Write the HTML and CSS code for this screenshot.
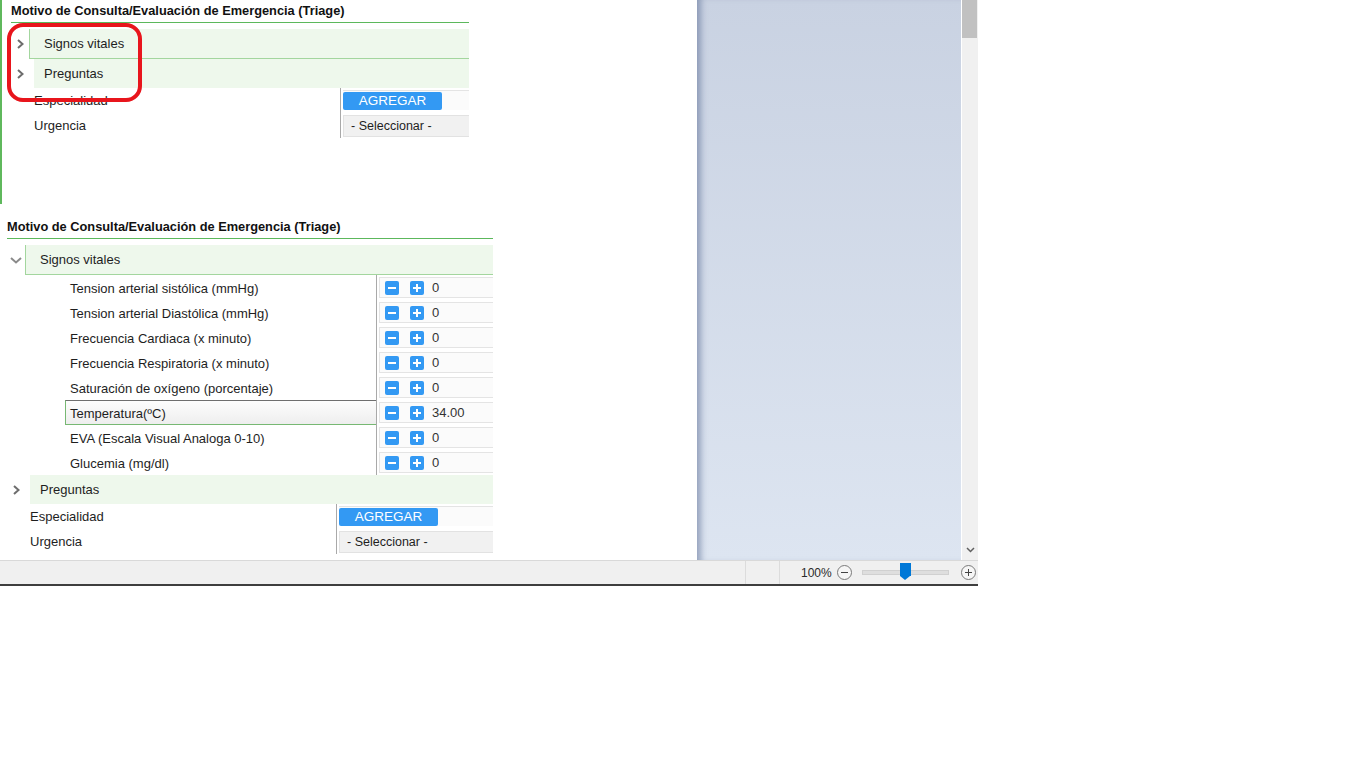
FILE: index.html
```html
<!DOCTYPE html>
<html lang="es">
<head>
  <meta charset="UTF-8" />
  <meta name="viewport" content="width=device-width, initial-scale=1" />
  <title>Triage - Documento</title>
  <link rel="stylesheet" href="styles.css">
</head>
<body>
  <div class="window">
    <div class="workspace">
      <div class="page">

        <!-- primera captura, recortada arriba -->
        <section class="snap snap-cropped">
          <h3 class="snap-title">Motivo de Consulta/Evaluación de Emergencia (Triage)</h3>
          <div class="group">
            <span class="chev"><svg width="7" height="10" viewBox="0 0 7 10"><polyline points="1,1 5.5,5 1,9" /></svg></span>
            <div class="group-head is-focused">Signos vitales</div>
          </div>
          <div class="group">
            <span class="chev"><svg width="7" height="10" viewBox="0 0 7 10"><polyline points="1,1 5.5,5 1,9" /></svg></span>
            <div class="group-head">Preguntas</div>
          </div>
          <div class="field-row">
            <span class="field-label">Especialidad</span>
            <div class="field-value"><div class="field-box"><button class="btn-add">AGREGAR</button></div></div>
          </div>
          <div class="field-row">
            <span class="field-label">Urgencia</span>
            <div class="field-value"><div class="select-box">- Seleccionar -</div></div>
          </div>
          <div class="callout"></div>
        </section>

        <!-- segunda captura, signos vitales abiertos -->
        <section class="snap snap-full">
          <h3 class="snap-title">Motivo de Consulta/Evaluación de Emergencia (Triage)</h3>
          <div class="group">
            <span class="chev chev-open"><svg width="12" height="7" viewBox="0 0 12 7"><polyline points="1,1 6,5.5 11,1" /></svg></span>
            <div class="group-head is-focused">Signos vitales</div>
          </div>
          <div class="vitals">
            <div class="vital-row">
              <div class="vital-cell"><span class="vital-label">Tension arterial sistólica (mmHg)</span></div>
              <div class="vital-value"><div class="stepper"><span class="step step-minus"></span><span class="step step-plus"></span><span class="step-num">0</span></div></div>
            </div>
            <div class="vital-row">
              <div class="vital-cell"><span class="vital-label">Tension arterial Diastólica (mmHg)</span></div>
              <div class="vital-value"><div class="stepper"><span class="step step-minus"></span><span class="step step-plus"></span><span class="step-num">0</span></div></div>
            </div>
            <div class="vital-row">
              <div class="vital-cell"><span class="vital-label">Frecuencia Cardiaca (x minuto)</span></div>
              <div class="vital-value"><div class="stepper"><span class="step step-minus"></span><span class="step step-plus"></span><span class="step-num">0</span></div></div>
            </div>
            <div class="vital-row">
              <div class="vital-cell"><span class="vital-label">Frecuencia Respiratoria (x minuto)</span></div>
              <div class="vital-value"><div class="stepper"><span class="step step-minus"></span><span class="step step-plus"></span><span class="step-num">0</span></div></div>
            </div>
            <div class="vital-row">
              <div class="vital-cell"><span class="vital-label">Saturación de oxígeno (porcentaje)</span></div>
              <div class="vital-value"><div class="stepper"><span class="step step-minus"></span><span class="step step-plus"></span><span class="step-num">0</span></div></div>
            </div>
            <div class="vital-row">
              <div class="vital-cell"><span class="vital-label is-active">Temperatura(ºC)</span></div>
              <div class="vital-value"><div class="stepper"><span class="step step-minus"></span><span class="step step-plus"></span><span class="step-num">34.00</span></div></div>
            </div>
            <div class="vital-row">
              <div class="vital-cell"><span class="vital-label">EVA (Escala Visual Analoga 0-10)</span></div>
              <div class="vital-value"><div class="stepper"><span class="step step-minus"></span><span class="step step-plus"></span><span class="step-num">0</span></div></div>
            </div>
            <div class="vital-row">
              <div class="vital-cell"><span class="vital-label">Glucemia (mg/dl)</span></div>
              <div class="vital-value"><div class="stepper"><span class="step step-minus"></span><span class="step step-plus"></span><span class="step-num">0</span></div></div>
            </div>
          </div>
          <div class="group">
            <span class="chev"><svg width="7" height="10" viewBox="0 0 7 10"><polyline points="1,1 5.5,5 1,9" /></svg></span>
            <div class="group-head">Preguntas</div>
          </div>
          <div class="field-row">
            <span class="field-label">Especialidad</span>
            <div class="field-value"><div class="field-box"><button class="btn-add">AGREGAR</button></div></div>
          </div>
          <div class="field-row">
            <span class="field-label">Urgencia</span>
            <div class="field-value"><div class="select-box">- Seleccionar -</div></div>
          </div>
        </section>

      </div>
      <div class="backdrop"></div>
      <div class="scrollbar">
        <div class="scroll-thumb"></div>
        <svg class="scroll-down" width="9" height="6" viewBox="0 0 9 6"><polyline points="1,1 4.5,4.5 8,1" /></svg>
      </div>
    </div>

    <footer class="statusbar">
      <div class="status-cell status-main"></div>
      <div class="status-cell status-small"></div>
      <div class="zoom">
        <span class="zoom-level">100%</span>
        <span class="zoom-btn zoom-out"></span>
        <span class="zoom-track"><span class="zoom-thumb"></span></span>
        <span class="zoom-btn zoom-in"></span>
      </div>
    </footer>
  </div>
</body>
</html>
```

FILE: styles.css
```css
body {
  margin: 0;
  background: #fff;
  font-family: "Liberation Sans", Arial, sans-serif;
  font-size: 13px;
  color: #1e1e1e;
}
.window {
  width: 978px;
}
.workspace {
  display: grid;
  grid-template-columns: 697px 264px 17px;
  height: 560px;
}
.page {
  background: #fff;
  overflow: hidden;
  display: flex;
  flex-direction: column;
}

/* capturas */
.snap {
  position: relative;
  overflow: hidden;
  box-sizing: border-box;
}
.snap-cropped {
  width: 469px;
  height: 204px;
  border-left: 2px solid #5fb85c;
  padding-left: 2px;
}
.snap-full {
  width: 493px;
  margin-top: 12px;
}
.snap-title {
  margin: 0 0 6px 7px;
  height: 22px;
  line-height: 22px;
  font-size: 12.8px;
  font-weight: bold;
  color: #111;
  border-bottom: 1px solid #5cb85c;
}
.group {
  display: flex;
}
.chev {
  width: 25px;
  flex: none;
  display: flex;
  align-items: center;
  padding-left: 13px;
  box-sizing: border-box;
}
.chev polyline {
  fill: none;
  stroke: #6d6d6d;
  stroke-width: 2;
}
.chev-open {
  padding-left: 10px;
}
.chev-open polyline { stroke: #8a8a8a; }
.group-head {
  flex: 1;
  height: 29px;
  line-height: 29px;
  margin-left: 5px;
  padding-left: 10px;
  background: #eef8ec;
}
.group-head.is-focused {
  margin-left: 0;
  padding-left: 14px;
  border-left: 1px solid #a3d69e;
  border-bottom: 1px solid #a3d69e;
}

/* filas especialidad / urgencia */
.field-row {
  display: grid;
  grid-template-columns: 337px 1fr;
  height: 25px;
}
.field-label {
  line-height: 25px;
  padding-left: 30px;
  border-right: 1px solid #a9a9a9;
}
.field-value {
  padding: 2px 0 0 2px;
}
.field-box {
  height: 20px;
  border-top: 1px solid #e4e4e4;
  background: #fbfbfb;
  padding-top: 1px;
  box-sizing: border-box;
}
.btn-add {
  display: block;
  width: 99px;
  height: 18px;
  border: none;
  border-radius: 2px;
  background: #3399f3;
  color: #fff;
  font-family: "Liberation Sans", Arial, sans-serif;
  font-size: 13.5px;
  padding: 0;
  line-height: 18px;
}
.select-box {
  height: 22px;
  line-height: 21px;
  background: #f1f1f1;
  border: 1px solid #e2e2e2;
  border-right: none;
  padding-left: 7px;
  font-size: 12.5px;
  box-sizing: border-box;
}

/* signos vitales */
.vital-row {
  display: grid;
  grid-template-columns: 377px 1fr;
  height: 25px;
}
.vital-cell {
  padding-left: 65px;
  border-right: 1px solid #a9a9a9;
}
.vital-label {
  display: block;
  height: 25px;
  line-height: 25px;
  padding-left: 4px;
  border: 1px solid transparent;
  border-right: none;
  box-sizing: border-box;
}
.vital-label.is-active {
  border-color: #77b873;
  border-top-color: #6f6f6f;
  background: linear-gradient(#fdfdfd, #eeeeee);
}
.vital-value {
  padding: 2px 0 2px 2px;
}
.stepper {
  height: 21px;
  border: 1px solid #e4e4e4;
  border-right: none;
  background: #fbfbfb;
  display: flex;
  align-items: center;
  padding-left: 5px;
  box-sizing: border-box;
}
.step {
  position: relative;
  width: 14px;
  height: 14px;
  border-radius: 2px;
  background: #3399f3;
  margin-right: 11px;
}
.step-plus { margin-right: 8px; }
.step::before,
.step-plus::after {
  content: "";
  position: absolute;
  left: 3px;
  top: 6px;
  width: 8px;
  height: 2px;
  background: #fff;
}
.step-plus::after {
  left: 6px;
  top: 3px;
  width: 2px;
  height: 8px;
}
.step-num {
  color: #333;
}

/* marca roja encima de la primera captura */
.callout {
  position: absolute;
  left: 5px;
  top: 23px;
  width: 135px;
  height: 79px;
  border: 4px solid #e8151c;
  border-radius: 16px;
  box-sizing: border-box;
}

/* fondo de word y barra */
.backdrop {
  background: linear-gradient(#c9d2e2, #dde5f1);
  box-shadow: inset 8px 0 6px -4px rgba(90, 108, 145, 0.55);
}
.scrollbar {
  position: relative;
  background: #f0f0f0;
  border-left: 1px solid #fff;
}
.scroll-thumb {
  width: 15px;
  height: 38px;
  background: #c1c1c1;
}
.scroll-down {
  position: absolute;
  left: 4px;
  bottom: 7px;
}
.scroll-down polyline {
  fill: none;
  stroke: #606060;
  stroke-width: 1.5;
}

.statusbar {
  display: flex;
  height: 23px;
  background: #f0f0f0;
  border-top: 1px solid #d9d9d9;
  border-bottom: 2px solid #3e3e3e;
}
.status-cell {
  border-right: 1px solid #dcdcdc;
}
.status-main { width: 745px; }
.status-small { width: 33px; }
.zoom {
  display: flex;
  align-items: center;
  padding-left: 21px;
  font-size: 12px;
  color: #2a2a2a;
}
.zoom-level {
  width: 28px;
}
.zoom-btn {
  position: relative;
  width: 13px;
  height: 13px;
  border: 1px solid #7a7a7a;
  border-radius: 50%;
  background: #f6f6f6;
  margin-left: 8px;
}
.zoom-in { margin-left: 12px; }
.zoom-btn::before,
.zoom-in::after {
  content: "";
  position: absolute;
  left: 3px;
  top: 6px;
  width: 7px;
  height: 1px;
  background: #444;
}
.zoom-in::after {
  left: 6px;
  top: 3px;
  width: 1px;
  height: 7px;
}
.zoom-track {
  position: relative;
  width: 85px;
  height: 3px;
  background: #dedede;
  border: 1px solid #d0d0d0;
  margin-left: 10px;
}
.zoom-thumb {
  position: absolute;
  left: 37px;
  top: -8px;
  width: 11px;
  height: 13px;
  background: #0078d7;
}
.zoom-thumb::after {
  content: "";
  position: absolute;
  left: 0;
  top: 13px;
  border-left: 5.5px solid transparent;
  border-right: 5.5px solid transparent;
  border-top: 4px solid #0078d7;
}
```
